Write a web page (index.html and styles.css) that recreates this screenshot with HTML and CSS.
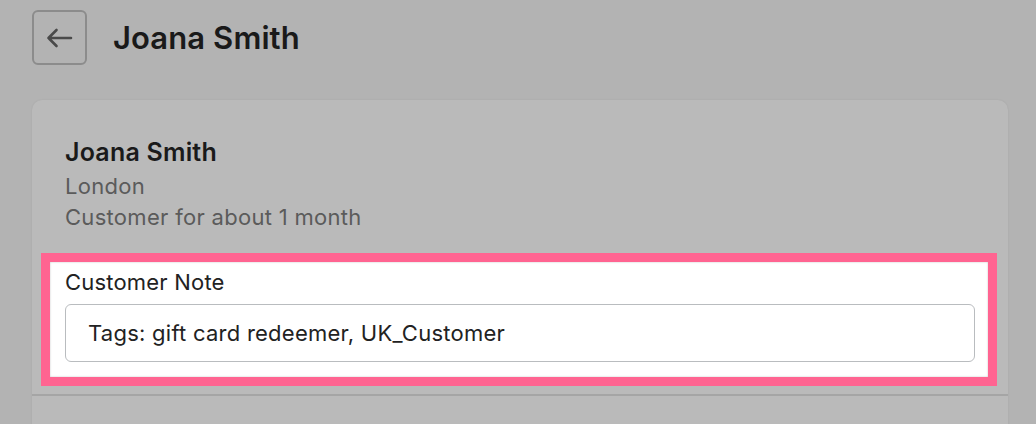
FILE: index.html
```html
<!DOCTYPE html>
<html>
<head>
<meta charset="utf-8">
<link rel="stylesheet" href="styles.css">
</head>
<body>
<div class="page">
  <header class="header">
    <button class="back" aria-label="Back">
      <svg width="28" height="22" viewBox="0 0 28 22"><path d="M26 11H3.5M11.5 3L3.5 11 11.5 19" fill="none" stroke="#4a4a4a" stroke-width="2.6" stroke-linecap="round" stroke-linejoin="round"/></svg>
    </button>
    <h1 class="title">Joana Smith</h1>
  </header>
  <section class="card">
    <div class="info">
      <div class="name">Joana Smith</div>
      <div class="meta">London</div>
      <div class="meta">Customer for about 1 month</div>
    </div>
    <div class="highlight">
      <div class="note">
        <label class="note-label">Customer Note</label>
        <div class="note-input">Tags: gift card redeemer, UK_Customer</div>
      </div>
    </div>
    <div class="divider"></div>
  </section>
</div>
</body>
</html>
```
FILE: styles.css
```css
html, body {
  margin: 0;
  height: 100%;
  overflow: hidden;
}
body {
  background: #b3b3b3;
  font-family: Inter, "Liberation Sans", sans-serif;
  color: #1c1c1c;
}
.page {
  display: flex;
  flex-direction: column;
}
.header {
  display: flex;
  align-items: center;
  gap: 26px;
  padding: 10px 32px 0;
  height: 55px;
}
.back {
  width: 55px;
  height: 55px;
  box-sizing: border-box;
  border: 2px solid #8c8c8c;
  border-radius: 6px;
  background: transparent;
  display: flex;
  align-items: center;
  justify-content: center;
  padding: 0 2px 0 0;
}
.title {
  margin: 0;
  font-size: 31px;
  font-weight: 600;
  letter-spacing: 0.1px;
  color: #1a1a1a;
}
.card {
  margin: 35px 28px 0 32px;
  background: #bababa;
  border-radius: 10px;
  padding-top: 38px;
  height: 400px;
  box-shadow: 0 0 2px rgba(0,0,0,0.08);
}
.info {
  padding: 0 33px;
  display: flex;
  flex-direction: column;
}
.name {
  font-size: 25px;
  font-weight: 600;
  letter-spacing: 0.2px;
  line-height: 28px;
  margin-bottom: 5px;
  color: #1a1a1a;
}
.meta {
  font-size: 22px;
  letter-spacing: 0.3px;
  line-height: 31px;
  color: #5b5b5b;
}
.highlight {
  margin: 20px 11px 0 9px;
  border: 9px solid #ff6491;
  background: #fff;
  box-shadow: inset 0 0 2px rgba(0,0,0,0.25);
}
.note {
  padding: 7px 13px 15px 15px;
  display: flex;
  flex-direction: column;
  gap: 9px;
}
.note-label {
  font-size: 22px;
  letter-spacing: 0.2px;
  line-height: 26px;
  color: #222;
}
.note-input {
  height: 58px;
  box-sizing: border-box;
  border: 1.5px solid #b9bcbf;
  border-radius: 6px;
  padding: 0 22px;
  display: flex;
  align-items: center;
  font-size: 22px;
  letter-spacing: 0.25px;
  color: #222;
}
.divider {
  margin-top: 8px;
  height: 2px;
  background: #a5a5a5;
}
```
